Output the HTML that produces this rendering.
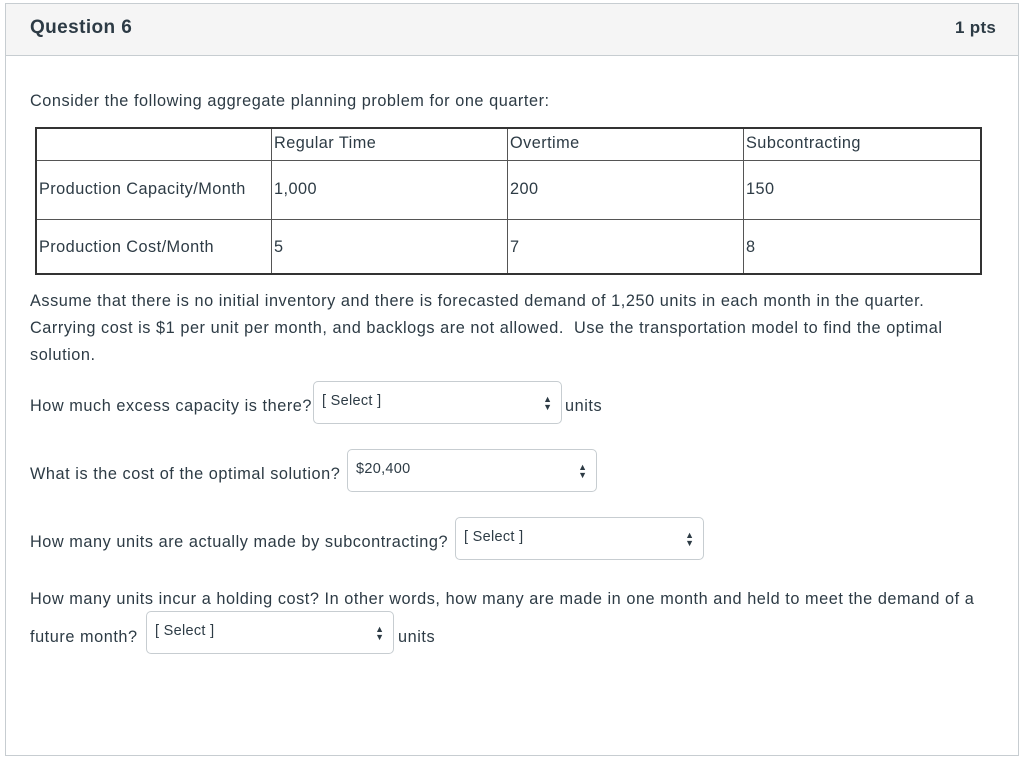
<!DOCTYPE html>
<html><head><style>
body{margin:0;width:1024px;height:761px;background:#fff;font-family:"Liberation Sans",sans-serif;color:#2d3b45;position:relative;overflow:hidden}
.box{position:absolute;left:5px;top:3px;width:1014px;height:753px;border:1px solid #c7cdd1;box-sizing:border-box}
.hdr{position:absolute;left:0;top:0;right:0;height:51px;background:#f5f5f5;border-bottom:1px solid #c7cdd1}
.t{position:absolute;font-size:16.3px;letter-spacing:0.55px;white-space:nowrap}
.sel{position:absolute;border:1px solid #c7cdd1;border-radius:5px;box-sizing:border-box;background:#fff}
.sel span{position:absolute;left:8px;top:11px;font-size:14.5px;letter-spacing:0.3px}
.arr{position:absolute;right:9px;top:13px;font-size:9px;line-height:8px;font-style:normal}
table{position:absolute;left:35px;top:127px;border-collapse:collapse;font-size:16.3px;letter-spacing:0.45px}
td{border:1px solid #555;padding:0 2px;vertical-align:top;white-space:nowrap}
</style></head><body>
<div class="box"><div class="hdr"></div></div>
<div class="t" style="left:30px;top:17px;font-size:19px;font-weight:bold;letter-spacing:0.4px">Question 6</div>
<div class="t" style="left:955px;top:18px;font-size:17px;font-weight:bold;letter-spacing:0.3px">1 pts</div>
<div class="t" style="left:30px;top:92px">Consider the following aggregate planning problem for one quarter:</div>
<table>
<tr style="height:32px"><td style="width:230px;border-left:2px solid #333;border-top:2px solid #333"></td><td style="width:231px;border-top:2px solid #333;padding-top:5px">Regular Time</td><td style="width:231px;border-top:2px solid #333;padding-top:5px">Overtime</td><td style="width:232px;border-top:2px solid #333;border-right:2px solid #333;padding-top:5px">Subcontracting</td></tr>
<tr style="height:59px"><td style="border-left:2px solid #333;padding-top:19px">Production Capacity/Month</td><td style="padding-top:19px">1,000</td><td style="padding-top:19px">200</td><td style="padding-top:19px;border-right:2px solid #333">150</td></tr>
<tr style="height:55px"><td style="border-left:2px solid #333;border-bottom:2px solid #333;padding-top:18px">Production Cost/Month</td><td style="border-bottom:2px solid #333;padding-top:18px">5</td><td style="border-bottom:2px solid #333;padding-top:18px">7</td><td style="border-bottom:2px solid #333;border-right:2px solid #333;padding-top:18px">8</td></tr>
</table>
<div class="t" style="left:30px;top:292px">Assume that there is no initial inventory and there is forecasted demand of 1,250 units in each month in the quarter.</div>
<div class="t" style="left:30px;top:319px">Carrying cost is $1 per unit per month, and backlogs are not allowed.&nbsp; Use the transportation model to find the optimal</div>
<div class="t" style="left:30px;top:346px">solution.</div>
<div class="t" style="left:30px;top:397px">How much excess capacity is there?</div>
<div class="sel" style="left:313px;top:381px;width:249px;height:43px"><span>[ Select ]</span><b class="arr">▲<br>▼</b></div>
<div class="t" style="left:565px;top:397px">units</div>
<div class="t" style="left:30px;top:465px">What is the cost of the optimal solution?</div>
<div class="sel" style="left:347px;top:449px;width:250px;height:43px"><span>$20,400</span><b class="arr">▲<br>▼</b></div>
<div class="t" style="left:30px;top:533px">How many units are actually made by subcontracting?</div>
<div class="sel" style="left:455px;top:517px;width:249px;height:43px"><span>[ Select ]</span><b class="arr">▲<br>▼</b></div>
<div class="t" style="left:30px;top:590px">How many units incur a holding cost? In other words, how many are made in one month and held to meet the demand of a</div>
<div class="t" style="left:30px;top:628px">future month?</div>
<div class="sel" style="left:146px;top:611px;width:248px;height:43px"><span>[ Select ]</span><b class="arr">▲<br>▼</b></div>
<div class="t" style="left:398px;top:628px">units</div>
</body></html>
